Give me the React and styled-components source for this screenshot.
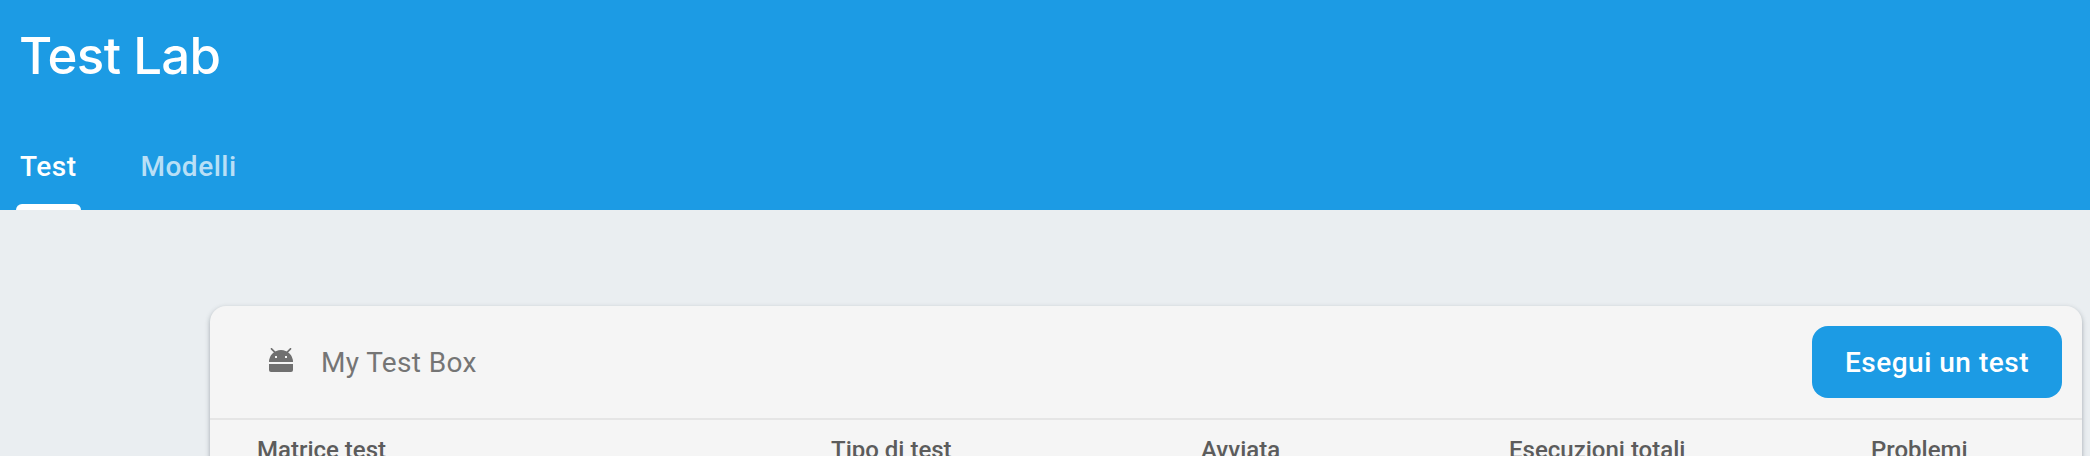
import React from "react";
import styled, { createGlobalStyle } from "styled-components";

const Global = createGlobalStyle`
  *{box-sizing:border-box}
  body{margin:0;background:#eaeef1;overflow:hidden;font-family:Roboto,sans-serif}
`;
const Page = styled.div`height:456px;overflow:hidden;background:#eaeef1;`;
const Header = styled.header`height:210px;background:#1c9be4;display:flex;flex-direction:column;justify-content:space-between;padding:23px 16px 0;`;
const Title = styled.h1`margin:0;padding-left:3px;font:500 51px/66px Inter,sans-serif;letter-spacing:-.7px;color:#fff;`;
const Tabs = styled.nav`display:flex;gap:56px;`;
const Tab = styled.div`height:78px;padding:0 4px;font-size:28px;font-weight:500;letter-spacing:.5px;line-height:70px;color:${p => p.$active ? "#fff" : "rgba(255,255,255,.7)"};
  display:flex;flex-direction:column;justify-content:space-between;
  &::after{content:"";height:6px;margin:0 -4px;border-radius:6px 6px 0 0;background:${p => p.$active ? "#fff" : "transparent"};}
`;
const Card = styled.section`margin:96px 8px 0 210px;height:300px;background:#f5f5f5;border-radius:16px;box-shadow:0 2px 5px rgba(40,55,65,.38);`;
const CardHead = styled.div`height:114px;display:flex;align-items:center;padding:0 20px 0 59px;border-bottom:2px solid #e5e5e5;`;
const Icon = styled.svg`display:block;margin-top:-4px;`;
const Name = styled.span`flex:1;margin-left:28px;font-size:28px;letter-spacing:.35px;color:#757575;`;
const Button = styled.button`width:250px;height:72px;padding:0;border:0;border-radius:16px;background:#1c9be4;color:#fff;font:500 28px Roboto,sans-serif;letter-spacing:.5px;`;
const Columns = styled.div`display:grid;grid-template-columns:574px 370px 308px 362px 1fr;padding:14px 0 0 47px;`;
const Column = styled.span`font-size:24px;font-weight:500;line-height:32px;color:#5c5c5c;`;
const Android = () => (
  <Icon width="24" height="24" viewBox="0 0 24 24" fill="#707070">
    <path d="M2.5.8 6 4.3M21.5.8 18 4.3" stroke="#707070" strokeWidth="1.7" strokeLinecap="round" />
    <path fillRule="evenodd" d="M0 14A12 12 0 0 1 24 14ZM6 8v2h2V8ZM16 8v2h2V8Z" />
    <path d="M0 16h24v6q0 2-2 2H2q-2 0-2-2z" />
  </Icon>
);

export default function App() {
  return <Page><Global />
    <Header><Title>Test Lab</Title><Tabs><Tab $active>Test</Tab><Tab>Modelli</Tab></Tabs></Header>
    <Card>
      <CardHead><Android /><Name>My Test Box</Name><Button>Esegui un test</Button></CardHead>
      <Columns>{["Matrice test","Tipo di test","Avviata","Esecuzioni totali","Problemi"].map(t => <Column key={t}>{t}</Column>)}</Columns>
    </Card>
  </Page>;
}
